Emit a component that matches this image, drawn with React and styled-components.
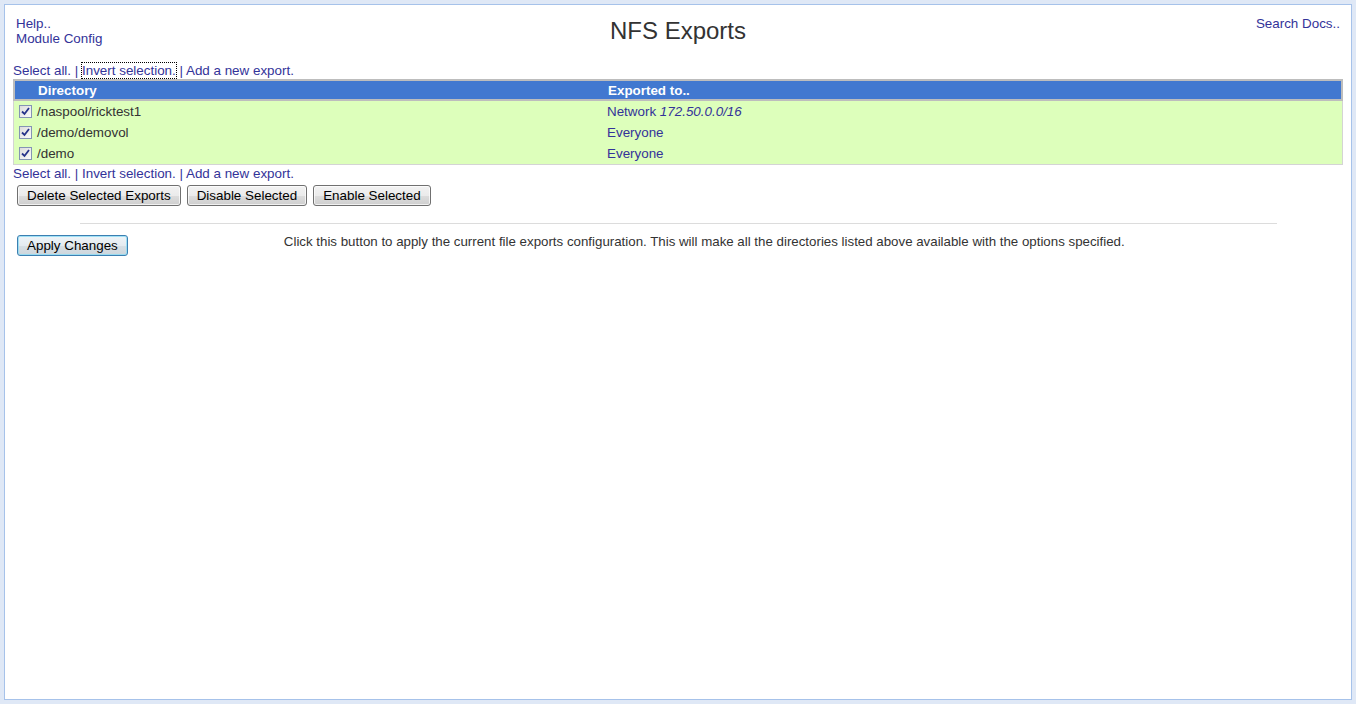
import React from 'react';
import styled, { createGlobalStyle } from 'styled-components';

const GlobalStyle = createGlobalStyle`
  html, body {
    margin: 0;
    padding: 0;
    height: 100%;
    background: #dfe8f6;
  }
  #root {
    height: 100%;
  }
`;

const Page = styled.div`
  box-sizing: border-box;
  height: 100%;
  padding: 4px;
  font-family: "Liberation Sans", Arial, sans-serif;
  font-size: 13.4px;
  color: #333;
`;

const Panel = styled.div`
  box-sizing: border-box;
  height: 100%;
  background: #fff;
  border: 1px solid #a6c2ea;
  padding: 11px 8px 0 8px;
`;

const Header = styled.div`
  display: grid;
  grid-template-columns: 1fr auto 1fr;
  align-items: start;
`;

const HeaderLinks = styled.div`
  display: flex;
  flex-direction: column;
  align-items: ${p => (p.$right ? 'flex-end' : 'flex-start')};
  padding: ${p => (p.$right ? '0 3px 0 0' : '0 0 0 3px')};
  line-height: 15px;
`;

const Link = styled.a`
  color: #333399;
  text-decoration: none;
  cursor: pointer;
  ${p => p.$focused && `outline: 1px dotted #000; outline-offset: 0;`}
`;

const Title = styled.h1`
  margin: 1px 0 0 0;
  font-size: 24px;
  font-weight: normal;
  line-height: 28px;
  color: #333;
`;

const SelectBar = styled.div`
  margin-top: ${p => p.$top}px;
  line-height: 15px;
  color: #333399;
`;

const Table = styled.div`
  border: 1px solid #d4d4d4;
  border-top: none;
  margin-top: 1px;
`;

const Row = styled.div`
  box-sizing: border-box;
  display: grid;
  grid-template-columns: 22px 570px 1fr;
  align-items: center;
  height: ${p => (p.$head ? 22 : 21)}px;
  background: ${p => (p.$head ? '#4178d0' : '#ddffbb')};
  color: ${p => (p.$head ? '#fff' : '#333')};
  font-weight: ${p => (p.$head ? 'bold' : 'normal')};
  ${p => p.$head && `
    border: 2px solid #bdbdbd;
    margin: 0 -1px;
  `}
`;

const Cell = styled.div`
  padding-left: 1px;
  white-space: nowrap;
  color: ${p => (p.$link ? '#333399' : 'inherit')};
`;

const CheckCell = styled.div`
  display: flex;
  align-items: center;
  padding-left: 5px;
`;

const Box = styled.span`
  box-sizing: border-box;
  width: 13px;
  height: 13px;
  border: 1px solid #8494b4;
  background: linear-gradient(135deg, #dcdcdc, #fafafa);
  display: flex;
  align-items: center;
  justify-content: center;
`;

const Buttons = styled.div`
  display: flex;
  gap: 6px;
  margin: 4px 0 0 4px;
`;

const Button = styled.button`
  font-family: "Liberation Sans", Arial, sans-serif;
  font-size: 13.4px;
  color: #000;
  height: 21px;
  padding: 0 9px;
  border: 1px solid ${p => (p.$primary ? '#3c7fb1' : '#707070')};
  border-radius: 3px;
  background: ${p =>
    p.$primary
      ? 'linear-gradient(#eef4f8 0%, #e4ebf0 50%, #d6dfe5 51%, #cdd6dc 100%)'
      : 'linear-gradient(#f2f2f2 0%, #ebebeb 50%, #dddddd 51%, #cfcfcf 100%)'};
  box-shadow: inset 0 0 0 1px ${p => (p.$primary ? 'rgba(140,220,245,0.8)' : 'rgba(255,255,255,0.7)')};
  cursor: pointer;
`;

const Rule = styled.hr`
  width: 1197px;
  margin: 17px auto 0 auto;
  border: none;
  border-top: 1px solid #dcdcdc;
`;

const ApplyRow = styled.div`
  display: flex;
  align-items: flex-start;
  margin: 11px 0 0 4px;
`;

const Note = styled.div`
  margin: 0 0 0 156px;
  font-size: 13.3px;
  line-height: 13px;
`;

const Check = () => (
  <Box>
    <svg width="9" height="9" viewBox="0 0 9 9">
      <path d="M1 4.5 L3.5 7 L8 1" fill="none" stroke="#26338a" strokeWidth="1.8" />
    </svg>
  </Box>
);

const exportsList = [
  { dir: '/naspool/ricktest1', to: 'network', net: '172.50.0.0/16' },
  { dir: '/demo/demovol', to: 'Everyone' },
  { dir: '/demo', to: 'Everyone' },
];

const SelectLinks = ({ focus }) => (
  <>
    <Link>Select all.</Link> | <Link $focused={focus}>Invert selection.</Link> | <Link>Add a new export.</Link>
  </>
);

const App = () => (
  <Page>
    <GlobalStyle />
    <Panel>
      <Header>
        <HeaderLinks>
          <Link>Help..</Link>
          <Link>Module Config</Link>
        </HeaderLinks>
        <Title>NFS Exports</Title>
        <HeaderLinks $right>
          <Link>Search Docs..</Link>
        </HeaderLinks>
      </Header>

      <SelectBar $top={17}>
        <SelectLinks focus />
      </SelectBar>

      <Table>
        <Row $head>
          <div />
          <Cell>Directory</Cell>
          <Cell>Exported to..</Cell>
        </Row>
        {exportsList.map(e => (
          <Row key={e.dir}>
            <CheckCell>
              <Check />
            </CheckCell>
            <Cell>{e.dir}</Cell>
            <Cell $link>
              {e.net ? (
                <>
                  Network <i>{e.net}</i>
                </>
              ) : (
                e.to
              )}
            </Cell>
          </Row>
        ))}
      </Table>

      <SelectBar $top={1}>
        <SelectLinks />
      </SelectBar>

      <Buttons>
        <Button>Delete Selected Exports</Button>
        <Button>Disable Selected</Button>
        <Button>Enable Selected</Button>
      </Buttons>

      <Rule />

      <ApplyRow>
        <Button $primary>Apply Changes</Button>
        <Note>
          Click this button to apply the current file exports configuration. This will make all the
          directories listed above available with the options specified.
        </Note>
      </ApplyRow>
    </Panel>
  </Page>
);

export default App;
